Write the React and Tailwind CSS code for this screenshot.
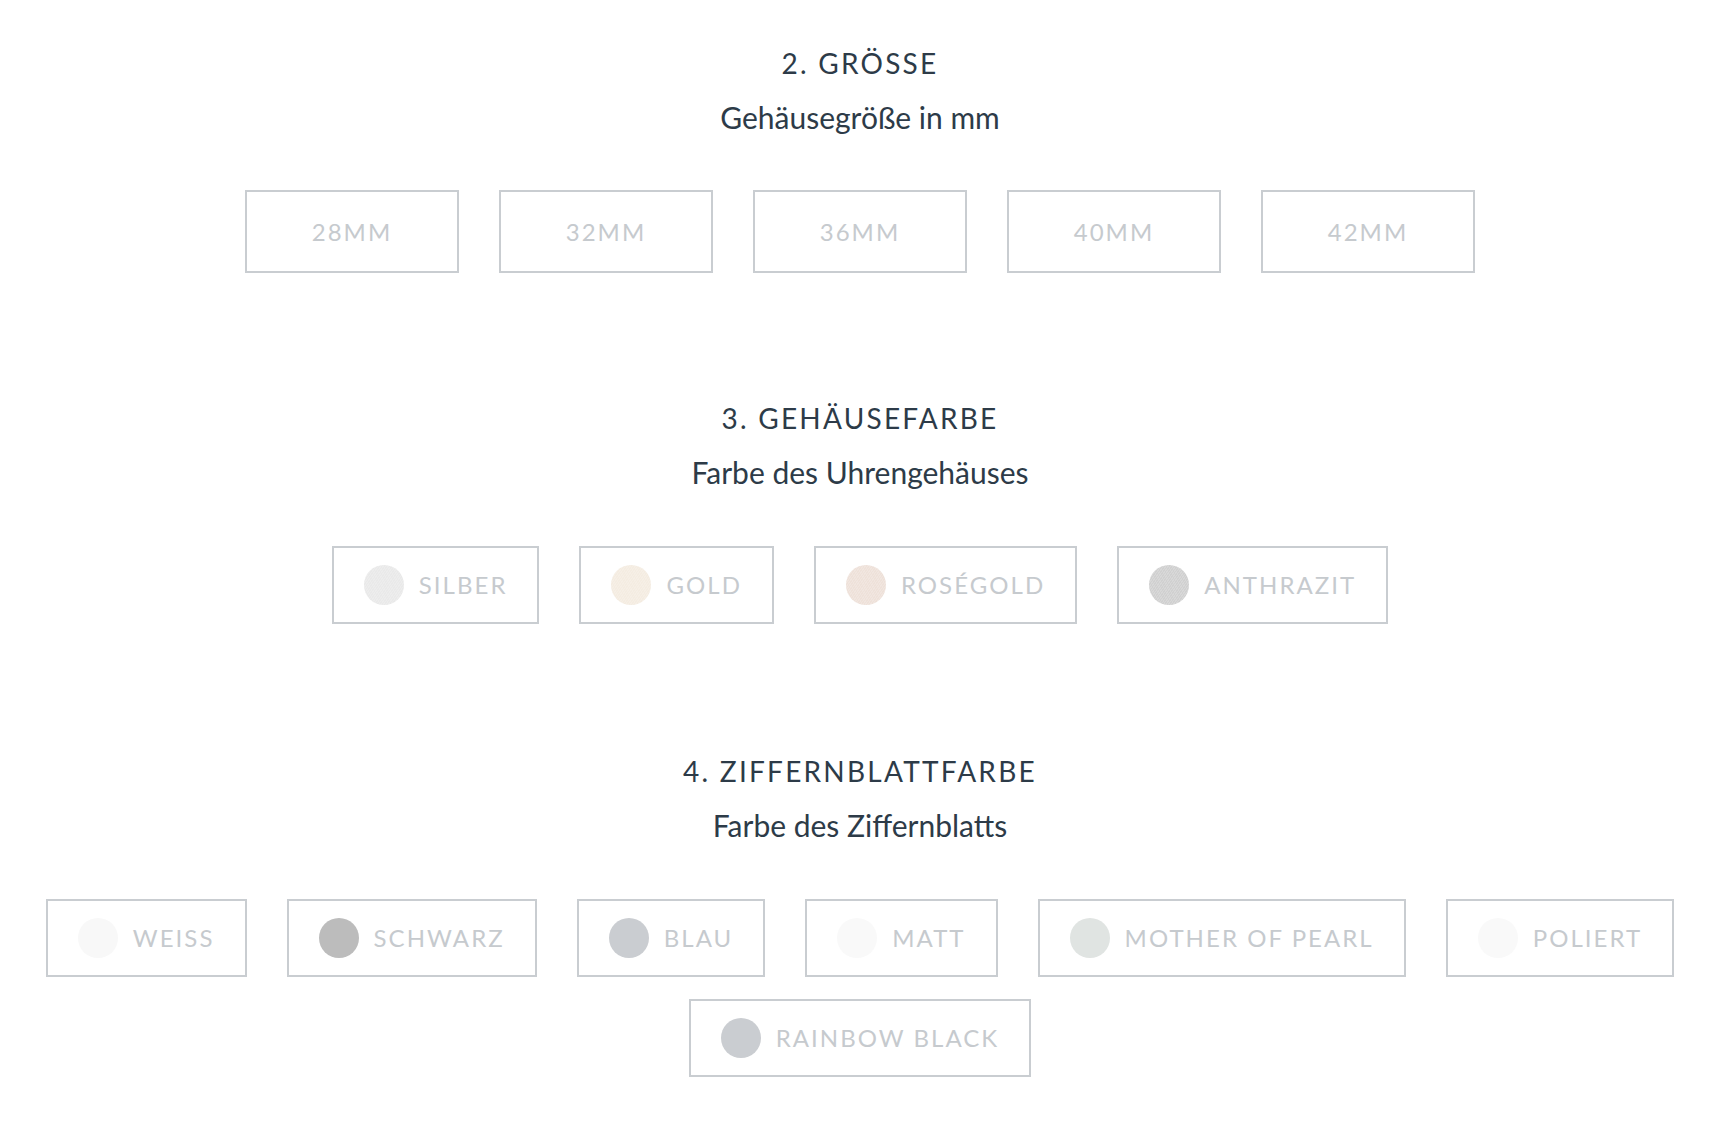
import React from 'react';

const sizes = ['28MM', '32MM', '36MM', '40MM', '42MM'];

const metal =
  'bg-[repeating-linear-gradient(125deg,rgba(255,255,255,0.18)_0px,rgba(255,255,255,0.18)_1px,transparent_1px,transparent_2px)]';

const caseColors = [
  { label: 'SILBER', swatch: `bg-[#e9e9e9] ${metal}` },
  { label: 'GOLD', swatch: `bg-[#f4ece1] ${metal}` },
  { label: 'ROSÉGOLD', swatch: `bg-[#eee1d9] ${metal}` },
  { label: 'ANTHRAZIT', swatch: `bg-[#d0d0d0] ${metal}` },
];

const dialColors = [
  { label: 'WEISS', swatch: 'bg-[#f8f8f8]' },
  { label: 'SCHWARZ', swatch: 'bg-[#bcbcbc]' },
  { label: 'BLAU', swatch: 'bg-[#cacdd1]' },
  { label: 'MATT', swatch: 'bg-[#f9f9f9]' },
  { label: 'MOTHER OF PEARL', swatch: 'bg-[#e0e4e2]' },
  { label: 'POLIERT', swatch: 'bg-[#f9f9f9]' },
  { label: 'RAINBOW BLACK', swatch: 'bg-[#cacdd1]' },
];

function SectionHead({ title, subtitle }) {
  return (
    <div className="flex flex-col items-center text-[#2d3b48]">
      <h2 className="text-[28px] leading-[40px] tracking-[0.08em]">{title}</h2>
      <p className="mt-[14px] text-[30px] leading-[40px]">{subtitle}</p>
    </div>
  );
}

function SwatchOption({ label, swatch }) {
  return (
    <button
      type="button"
      className="flex h-[78px] items-center border-2 border-[#c9cdd1] bg-white px-[30px] text-[24px] tracking-[0.085em] text-[#c6cace]"
    >
      <span className={`mr-[15px] h-[40px] w-[40px] rounded-full ${swatch}`} />
      <span>{label}</span>
    </button>
  );
}

export default function App() {
  return (
    <div
      className="min-h-screen bg-white pl-[40px] pr-[46px] pt-[43px] pb-[50px]"
      style={{ fontFamily: 'Lato, "Open Sans", sans-serif' }}
    >
      <section>
        <SectionHead title="2. GRÖSSE" subtitle="Gehäusegröße in mm" />
        <div className="mt-[53px] flex flex-wrap justify-center gap-x-[40px] gap-y-[22px]">
          {sizes.map((s) => (
            <button
              key={s}
              type="button"
              className="flex h-[83px] w-[214px] items-center justify-center border-2 border-[#c9cdd1] bg-white text-[24px] tracking-[0.085em] text-[#c6cace]"
            >
              {s}
            </button>
          ))}
        </div>
      </section>

      <section className="mt-[125px]">
        <SectionHead title="3. GEHÄUSEFARBE" subtitle="Farbe des Uhrengehäuses" />
        <div className="mt-[54px] flex flex-wrap justify-center gap-x-[40px] gap-y-[22px]">
          {caseColors.map((c) => (
            <SwatchOption key={c.label} {...c} />
          ))}
        </div>
      </section>

      <section className="mt-[127px]">
        <SectionHead title="4. ZIFFERNBLATTFARBE" subtitle="Farbe des Ziffernblatts" />
        <div className="mt-[54px] flex flex-wrap justify-center gap-x-[40px] gap-y-[22px]">
          {dialColors.map((c) => (
            <SwatchOption key={c.label} {...c} />
          ))}
        </div>
      </section>
    </div>
  );
}
